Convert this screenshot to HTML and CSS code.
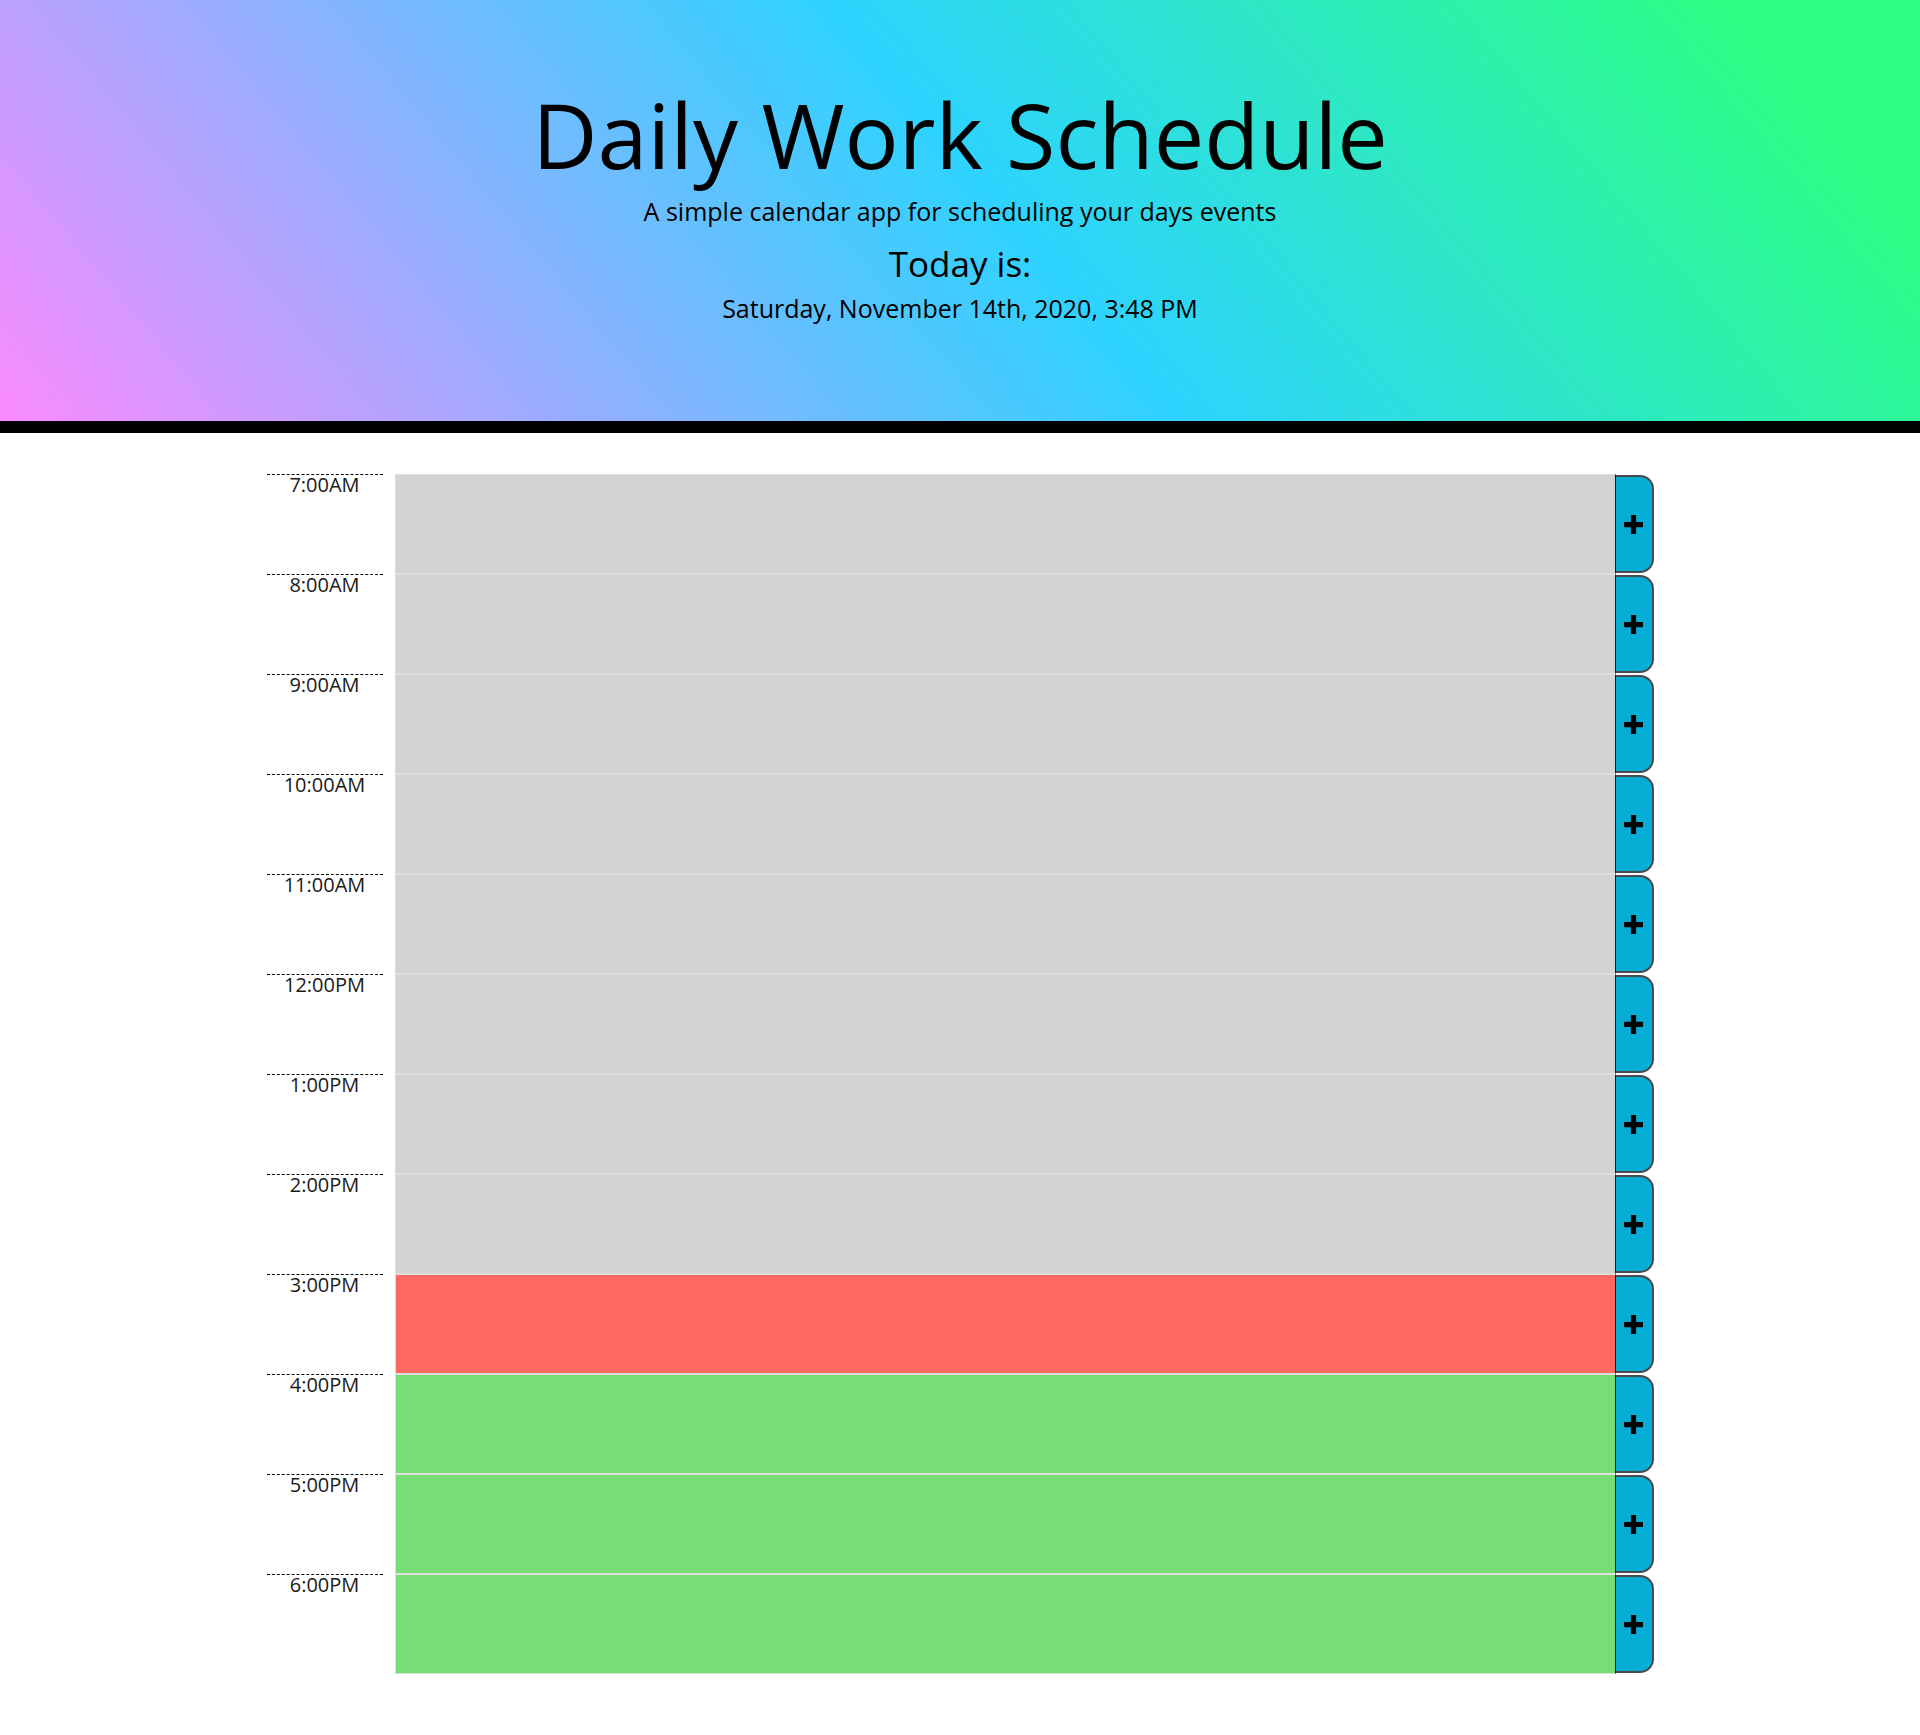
FILE: index.html
```html
<!DOCTYPE html>
<html lang="en">
<head>
<meta charset="utf-8">
<title>Daily Work Schedule</title>
<link rel="stylesheet" href="styles.css">
</head>
<body>
<header class="jumbotron">
  <h1 class="title">Daily Work Schedule</h1>
  <p class="lead">A simple calendar app for scheduling your days events</p>
  <h2 class="today-label">Today is:</h2>
  <p class="current-day">Saturday, November 14th, 2020, 3:48 PM</p>
</header>
<main class="schedule">
  <div class="time-block"><div class="hour">7:00AM</div><textarea class="description past"></textarea><button class="save-btn" aria-label="Save"><svg class="plus" viewBox="0 0 20 20" width="21" height="21"><path d="M7.5 1h5v6.5H19v5h-6.5V19h-5v-6.5H1v-5h6.5z"/></svg></button></div>
  <div class="time-block"><div class="hour">8:00AM</div><textarea class="description past"></textarea><button class="save-btn" aria-label="Save"><svg class="plus" viewBox="0 0 20 20" width="21" height="21"><path d="M7.5 1h5v6.5H19v5h-6.5V19h-5v-6.5H1v-5h6.5z"/></svg></button></div>
  <div class="time-block"><div class="hour">9:00AM</div><textarea class="description past"></textarea><button class="save-btn" aria-label="Save"><svg class="plus" viewBox="0 0 20 20" width="21" height="21"><path d="M7.5 1h5v6.5H19v5h-6.5V19h-5v-6.5H1v-5h6.5z"/></svg></button></div>
  <div class="time-block"><div class="hour">10:00AM</div><textarea class="description past"></textarea><button class="save-btn" aria-label="Save"><svg class="plus" viewBox="0 0 20 20" width="21" height="21"><path d="M7.5 1h5v6.5H19v5h-6.5V19h-5v-6.5H1v-5h6.5z"/></svg></button></div>
  <div class="time-block"><div class="hour">11:00AM</div><textarea class="description past"></textarea><button class="save-btn" aria-label="Save"><svg class="plus" viewBox="0 0 20 20" width="21" height="21"><path d="M7.5 1h5v6.5H19v5h-6.5V19h-5v-6.5H1v-5h6.5z"/></svg></button></div>
  <div class="time-block"><div class="hour">12:00PM</div><textarea class="description past"></textarea><button class="save-btn" aria-label="Save"><svg class="plus" viewBox="0 0 20 20" width="21" height="21"><path d="M7.5 1h5v6.5H19v5h-6.5V19h-5v-6.5H1v-5h6.5z"/></svg></button></div>
  <div class="time-block"><div class="hour">1:00PM</div><textarea class="description past"></textarea><button class="save-btn" aria-label="Save"><svg class="plus" viewBox="0 0 20 20" width="21" height="21"><path d="M7.5 1h5v6.5H19v5h-6.5V19h-5v-6.5H1v-5h6.5z"/></svg></button></div>
  <div class="time-block"><div class="hour">2:00PM</div><textarea class="description past"></textarea><button class="save-btn" aria-label="Save"><svg class="plus" viewBox="0 0 20 20" width="21" height="21"><path d="M7.5 1h5v6.5H19v5h-6.5V19h-5v-6.5H1v-5h6.5z"/></svg></button></div>
  <div class="time-block"><div class="hour">3:00PM</div><textarea class="description present"></textarea><button class="save-btn" aria-label="Save"><svg class="plus" viewBox="0 0 20 20" width="21" height="21"><path d="M7.5 1h5v6.5H19v5h-6.5V19h-5v-6.5H1v-5h6.5z"/></svg></button></div>
  <div class="time-block"><div class="hour">4:00PM</div><textarea class="description future"></textarea><button class="save-btn" aria-label="Save"><svg class="plus" viewBox="0 0 20 20" width="21" height="21"><path d="M7.5 1h5v6.5H19v5h-6.5V19h-5v-6.5H1v-5h6.5z"/></svg></button></div>
  <div class="time-block"><div class="hour">5:00PM</div><textarea class="description future"></textarea><button class="save-btn" aria-label="Save"><svg class="plus" viewBox="0 0 20 20" width="21" height="21"><path d="M7.5 1h5v6.5H19v5h-6.5V19h-5v-6.5H1v-5h6.5z"/></svg></button></div>
  <div class="time-block"><div class="hour">6:00PM</div><textarea class="description future"></textarea><button class="save-btn" aria-label="Save"><svg class="plus" viewBox="0 0 20 20" width="21" height="21"><path d="M7.5 1h5v6.5H19v5h-6.5V19h-5v-6.5H1v-5h6.5z"/></svg></button></div>
</main>
</body>
</html>
```

FILE: styles.css
```css
* { box-sizing: border-box; }

html, body {
  margin: 0;
  padding: 0;
  background: #ffffff;
  font-family: "Open Sans", "Noto Sans", sans-serif;
  color: #000000;
}

.jumbotron {
  height: 433px;
  padding-top: 80px;
  border-bottom: 12px solid #000000;
  background: linear-gradient(50deg, #fa8aff 0%, #2ed3ff 52%, #2cff82 92%);
  display: flex;
  flex-direction: column;
  align-items: center;
  text-align: center;
}

.title {
  margin: 0;
  font-size: 90px;
  font-weight: 400;
  line-height: 108px;
}

.lead {
  margin: 5px 0 0;
  font-size: 25px;
  line-height: 36px;
}

.today-label {
  margin: 14px 0 0;
  font-size: 35px;
  font-weight: 400;
  line-height: 41px;
}

.current-day {
  margin: 6px 0 0;
  font-size: 25px;
  line-height: 36px;
}

.schedule {
  width: 1387px;
  margin: 41px auto 63px;
  display: flex;
  flex-direction: column;
}

.time-block {
  display: flex;
  height: 100px;
}

.hour {
  width: 116px;
  flex: none;
  border-top: 1px dashed #000000;
  font-size: 20px;
  line-height: 20px;
  text-align: center;
  color: #1a1a1a;
  margin-right: 12px;
}

.description {
  flex: 1;
  height: 100px;
  margin: 0;
  border: 1px solid #dedede;
  border-right: 1px solid #1a1a1a;
  resize: none;
  font-family: inherit;
  font-size: 16px;
  color: #ffffff;
}

.past { background-color: #d3d3d3; }
.present { background-color: #ff6961; }
.future { background-color: #77dd77; }

.save-btn {
  width: 38px;
  flex: none;
  margin: 1px 0 1px;
  padding: 0;
  background-color: #06aed5;
  border: 2px solid #4a4a4a;
  border-left: 0;
  border-radius: 0 14px 14px 0;
  display: flex;
  align-items: center;
  justify-content: center;
  cursor: pointer;
}

.plus {
  display: block;
  fill: #000000;
}
```
